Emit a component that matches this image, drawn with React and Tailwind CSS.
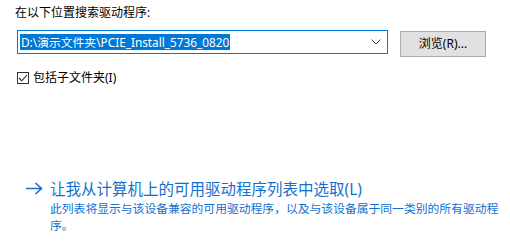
const font = { fontFamily: '"Noto Sans", "Noto Sans CJK SC", sans-serif' }

const Chevron = () => (
  <svg width="10" height="6" viewBox="0 0 10 6" className="text-[#444]">
    <path d="M0.5 0.5 L5 5 L9.5 0.5" fill="none" stroke="currentColor" strokeWidth="1" />
  </svg>
)

const Arrow = () => (
  <svg width="18" height="13" viewBox="0 0 18 13" className="text-[#1271d0]">
    <path d="M1 6.5 H16.5 M10.5 1 L16.5 6.5 L10.5 12" fill="none" stroke="currentColor" strokeWidth="1.6" />
  </svg>
)

const Check = () => (
  <span className="flex h-[12px] w-[12px] items-center justify-center border border-[#333] bg-white">
    <svg width="10" height="8" viewBox="0 0 10 8">
      <path d="M1 4 L3.8 6.8 L9 1" fill="none" stroke="#222" strokeWidth="1.1" />
    </svg>
  </span>
)

export default function App() {
  return (
    <div className="h-[250px] w-[510px] overflow-hidden bg-white text-[#000]" style={font}>
      <div className="px-[15px] pt-[5px]">
        <div className="text-[12px] leading-[16px]">在以下位置搜索驱动程序:</div>

        <div className="mt-[9px] flex items-start">
          <div className="ml-[2px] flex h-[24px] w-[371px] items-center border border-[#0078d7] bg-white pl-[2px] pr-[6px]">
            <span className="flex h-[16px] items-center bg-[#0078d7] px-[1px] text-[11.8px] leading-[16px] text-white">
              D:\演示文件夹\PCIE_Install_5736_0820
            </span>
            <span className="ml-auto">
              <Chevron />
            </span>
          </div>
          <button className="ml-[12px] mt-[1px] flex h-[26px] w-[86px] items-center justify-center border border-[#adadad] bg-[#e1e1e1] text-[12px] text-[#000]">
            浏览(R)...
          </button>
        </div>

        <div className="mt-[13px] flex items-center gap-[4px] pl-[2px]">
          <Check />
          <span className="text-[12px] leading-[16px]">包括子文件夹(I)</span>
        </div>

        <div className="mt-[93px] flex items-start pl-[10px]">
          <div className="mt-[3px] w-[25px] shrink-0">
            <Arrow />
          </div>
          <div className="shrink-0">
            <div className="text-[15.5px] leading-[20px] text-[#1271d0]">让我从计算机上的可用驱动程序列表中选取(L)</div>
            <div className="mt-[1px] w-[452px] text-[11.8px] leading-[17px] text-[#1271d0]">
              此列表将显示与该设备兼容的可用驱动程序，以及与该设备属于同一类别的所有驱动程序。
            </div>
          </div>
        </div>
      </div>
    </div>
  )
}
